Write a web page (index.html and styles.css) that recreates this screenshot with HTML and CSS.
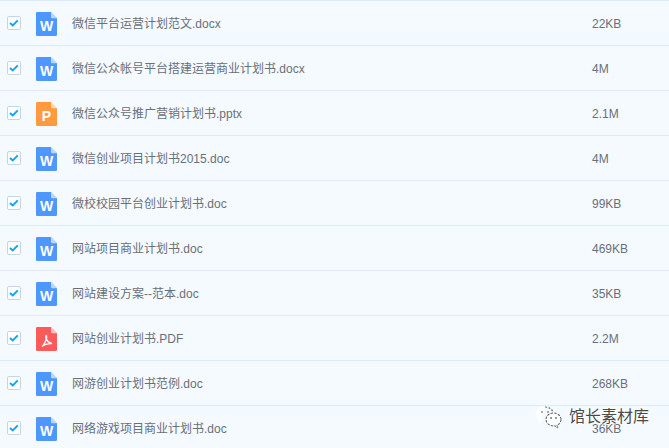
FILE: index.html
```html
<!DOCTYPE html>
<html lang="zh">
<head>
<meta charset="utf-8">
<title>文件列表</title>
<link rel="stylesheet" href="styles.css">
</head>
<body>
<svg class="defs" width="0" height="0" aria-hidden="true">
  <defs>
    <symbol id="sheet" viewBox="0 0 21 24">
      <path d="M1.2 0H15l6 6.2v16.6a1.2 1.2 0 0 1-1.2 1.2H1.2A1.2 1.2 0 0 1 0 22.800V1.200A1.200 1.200 0 0 1 1.200 0z" fill="currentColor"/>
      <path d="M15 0l6 6.200h-4.800A1.200 1.200 0 0 1 15 5z" fill="#fff" fill-opacity=".62"/>
    </symbol>
    <symbol id="check" viewBox="0 0 14 14">
      <rect x=".5" y=".5" width="13" height="13" rx="1.500" fill="#fff" stroke="#c5d5e6"/>
      <path d="M3 6.900l2.800 2.500 5-5" fill="none" stroke="#0fa5fb" stroke-width="2"/>
    </symbol>
  </defs>
</svg>
<ul class="list">
  <li class="row"><svg class="check"><use href="#check"/></svg><span class="icon word"><svg class="sheet"><use href="#sheet"/></svg><b class="letter">W</b></span><span class="name">微信平台运营计划范文.docx</span><span class="size">22KB</span></li>
  <li class="row"><svg class="check"><use href="#check"/></svg><span class="icon word"><svg class="sheet"><use href="#sheet"/></svg><b class="letter">W</b></span><span class="name">微信公众帐号平台搭建运营商业计划书.docx</span><span class="size">4M</span></li>
  <li class="row"><svg class="check"><use href="#check"/></svg><span class="icon ppt"><svg class="sheet"><use href="#sheet"/></svg><b class="letter">P</b></span><span class="name">微信公众号推广营销计划书.pptx</span><span class="size">2.1M</span></li>
  <li class="row"><svg class="check"><use href="#check"/></svg><span class="icon word"><svg class="sheet"><use href="#sheet"/></svg><b class="letter">W</b></span><span class="name">微信创业项目计划书2015.doc</span><span class="size">4M</span></li>
  <li class="row"><svg class="check"><use href="#check"/></svg><span class="icon word"><svg class="sheet"><use href="#sheet"/></svg><b class="letter">W</b></span><span class="name">微校校园平台创业计划书.doc</span><span class="size">99KB</span></li>
  <li class="row"><svg class="check"><use href="#check"/></svg><span class="icon word"><svg class="sheet"><use href="#sheet"/></svg><b class="letter">W</b></span><span class="name">网站项目商业计划书.doc</span><span class="size">469KB</span></li>
  <li class="row"><svg class="check"><use href="#check"/></svg><span class="icon word"><svg class="sheet"><use href="#sheet"/></svg><b class="letter">W</b></span><span class="name">网站建设方案--范本.doc</span><span class="size">35KB</span></li>
  <li class="row"><svg class="check"><use href="#check"/></svg><span class="icon pdf"><svg class="sheet"><use href="#sheet"/></svg><svg class="acrobat" viewBox="0 0 14 14"><path d="M2 12.500c1.500-1 3.300-4.300 4.300-7.500.4-1.500.6-3.200 0-3.500-.7 0-.7 2 0 3.500.9 2.200 2.700 3.900 5.700 4.700-2.600-.3-6.500.5-8.800 1.700z" fill="none" stroke="#fff" stroke-width="1.300"/></svg></span><span class="name">网站创业计划书.PDF</span><span class="size">2.2M</span></li>
  <li class="row"><svg class="check"><use href="#check"/></svg><span class="icon word"><svg class="sheet"><use href="#sheet"/></svg><b class="letter">W</b></span><span class="name">网游创业计划书范例.doc</span><span class="size">268KB</span></li>
  <li class="row"><svg class="check"><use href="#check"/></svg><span class="icon word"><svg class="sheet"><use href="#sheet"/></svg><b class="letter">W</b></span><span class="name">网络游戏项目商业计划书.doc</span><span class="size">36KB</span></li>
</ul>
<div class="mark">
  <svg class="mark-logo" viewBox="0 0 28 24"><path d="M10 2C5.500 2 2 5 2 8.800c0 2.200 1.200 4 3 5.200l-.8 2.600 3-1.600" fill="#fff" fill-opacity=".6" stroke="#fff" stroke-width="2"/><path d="M10 2c3.900 0 7.200 2.200 8 5.300" fill="none" stroke="#777" stroke-width="1.200" stroke-dasharray="2 1.500"/><ellipse cx="18.500" cy="14.500" rx="7.500" ry="6.500" fill="#fff" fill-opacity=".85" stroke="#666" stroke-width="1.100" stroke-dasharray="2.500 1.200"/><path d="M22 20l1 3-3.500-2" fill="#fff" stroke="#777" stroke-width=".8"/><circle cx="7" cy="7" r="1.100" fill="#999"/><circle cx="13" cy="7" r="1.100" fill="#999"/><circle cx="16" cy="13" r="1" fill="#777"/><circle cx="21" cy="13" r="1" fill="#777"/></svg>
  <span class="mark-text">馆长素材库</span>
</div>
</body>
</html>
```
FILE: styles.css
```css
html, body {
  margin: 0;
  padding: 0;
  height: 448px;
  overflow: hidden;
  background: #f4faff;
}
body {
  position: relative;
  font-family: "Liberation Sans", "Noto Sans CJK SC", sans-serif;
  font-size: 12px;
  color: #6a7078;
}
.defs { position: absolute; }
.list {
  list-style: none;
  margin: 0;
  padding: 0;
  border-top: 1px solid #dcebfa;
}
.row {
  display: flex;
  align-items: center;
  height: 44px;
  border-bottom: 1px solid #dcebfa;
  padding-left: 7px;
}
.check {
  width: 14px;
  height: 14px;
  flex: none;
}
.icon {
  position: relative;
  width: 21px;
  height: 24px;
  margin: 2px 0 0 15px;
  flex: none;
}
.sheet {
  display: block;
  width: 21px;
  height: 24px;
}
.word { color: #4d97ff; }
.ppt { color: #ff9a40; }
.pdf { color: #ff5a5a; }
.letter {
  position: absolute;
  left: 0;
  right: 0;
  top: 6px;
  text-align: center;
  font: 700 14px/16px "Liberation Sans", sans-serif;
  color: #fff;
}
.acrobat {
  position: absolute;
  left: 4px;
  top: 7px;
  width: 14px;
  height: 14px;
}
.name {
  margin: 3px 0 0 15px;
  width: 520px;
  flex: none;
  line-height: 17px;
  white-space: nowrap;
}
.size {
  margin-top: 3px;
  line-height: 17px;
  white-space: nowrap;
}
.mark {
  position: absolute;
  left: 535px;
  top: 405px;
  display: flex;
  align-items: center;
  gap: 6px;
}
.mark-logo {
  width: 28px;
  height: 24px;
}
.mark-text {
  font-size: 16px;
  line-height: 22px;
  color: #4a4a4a;
  text-shadow: 0 0 1px #fff, 1px 0 0 #fff, -1px 0 0 #fff, 0 1px 0 #fff, 0 -1px 0 #fff;
}
```
